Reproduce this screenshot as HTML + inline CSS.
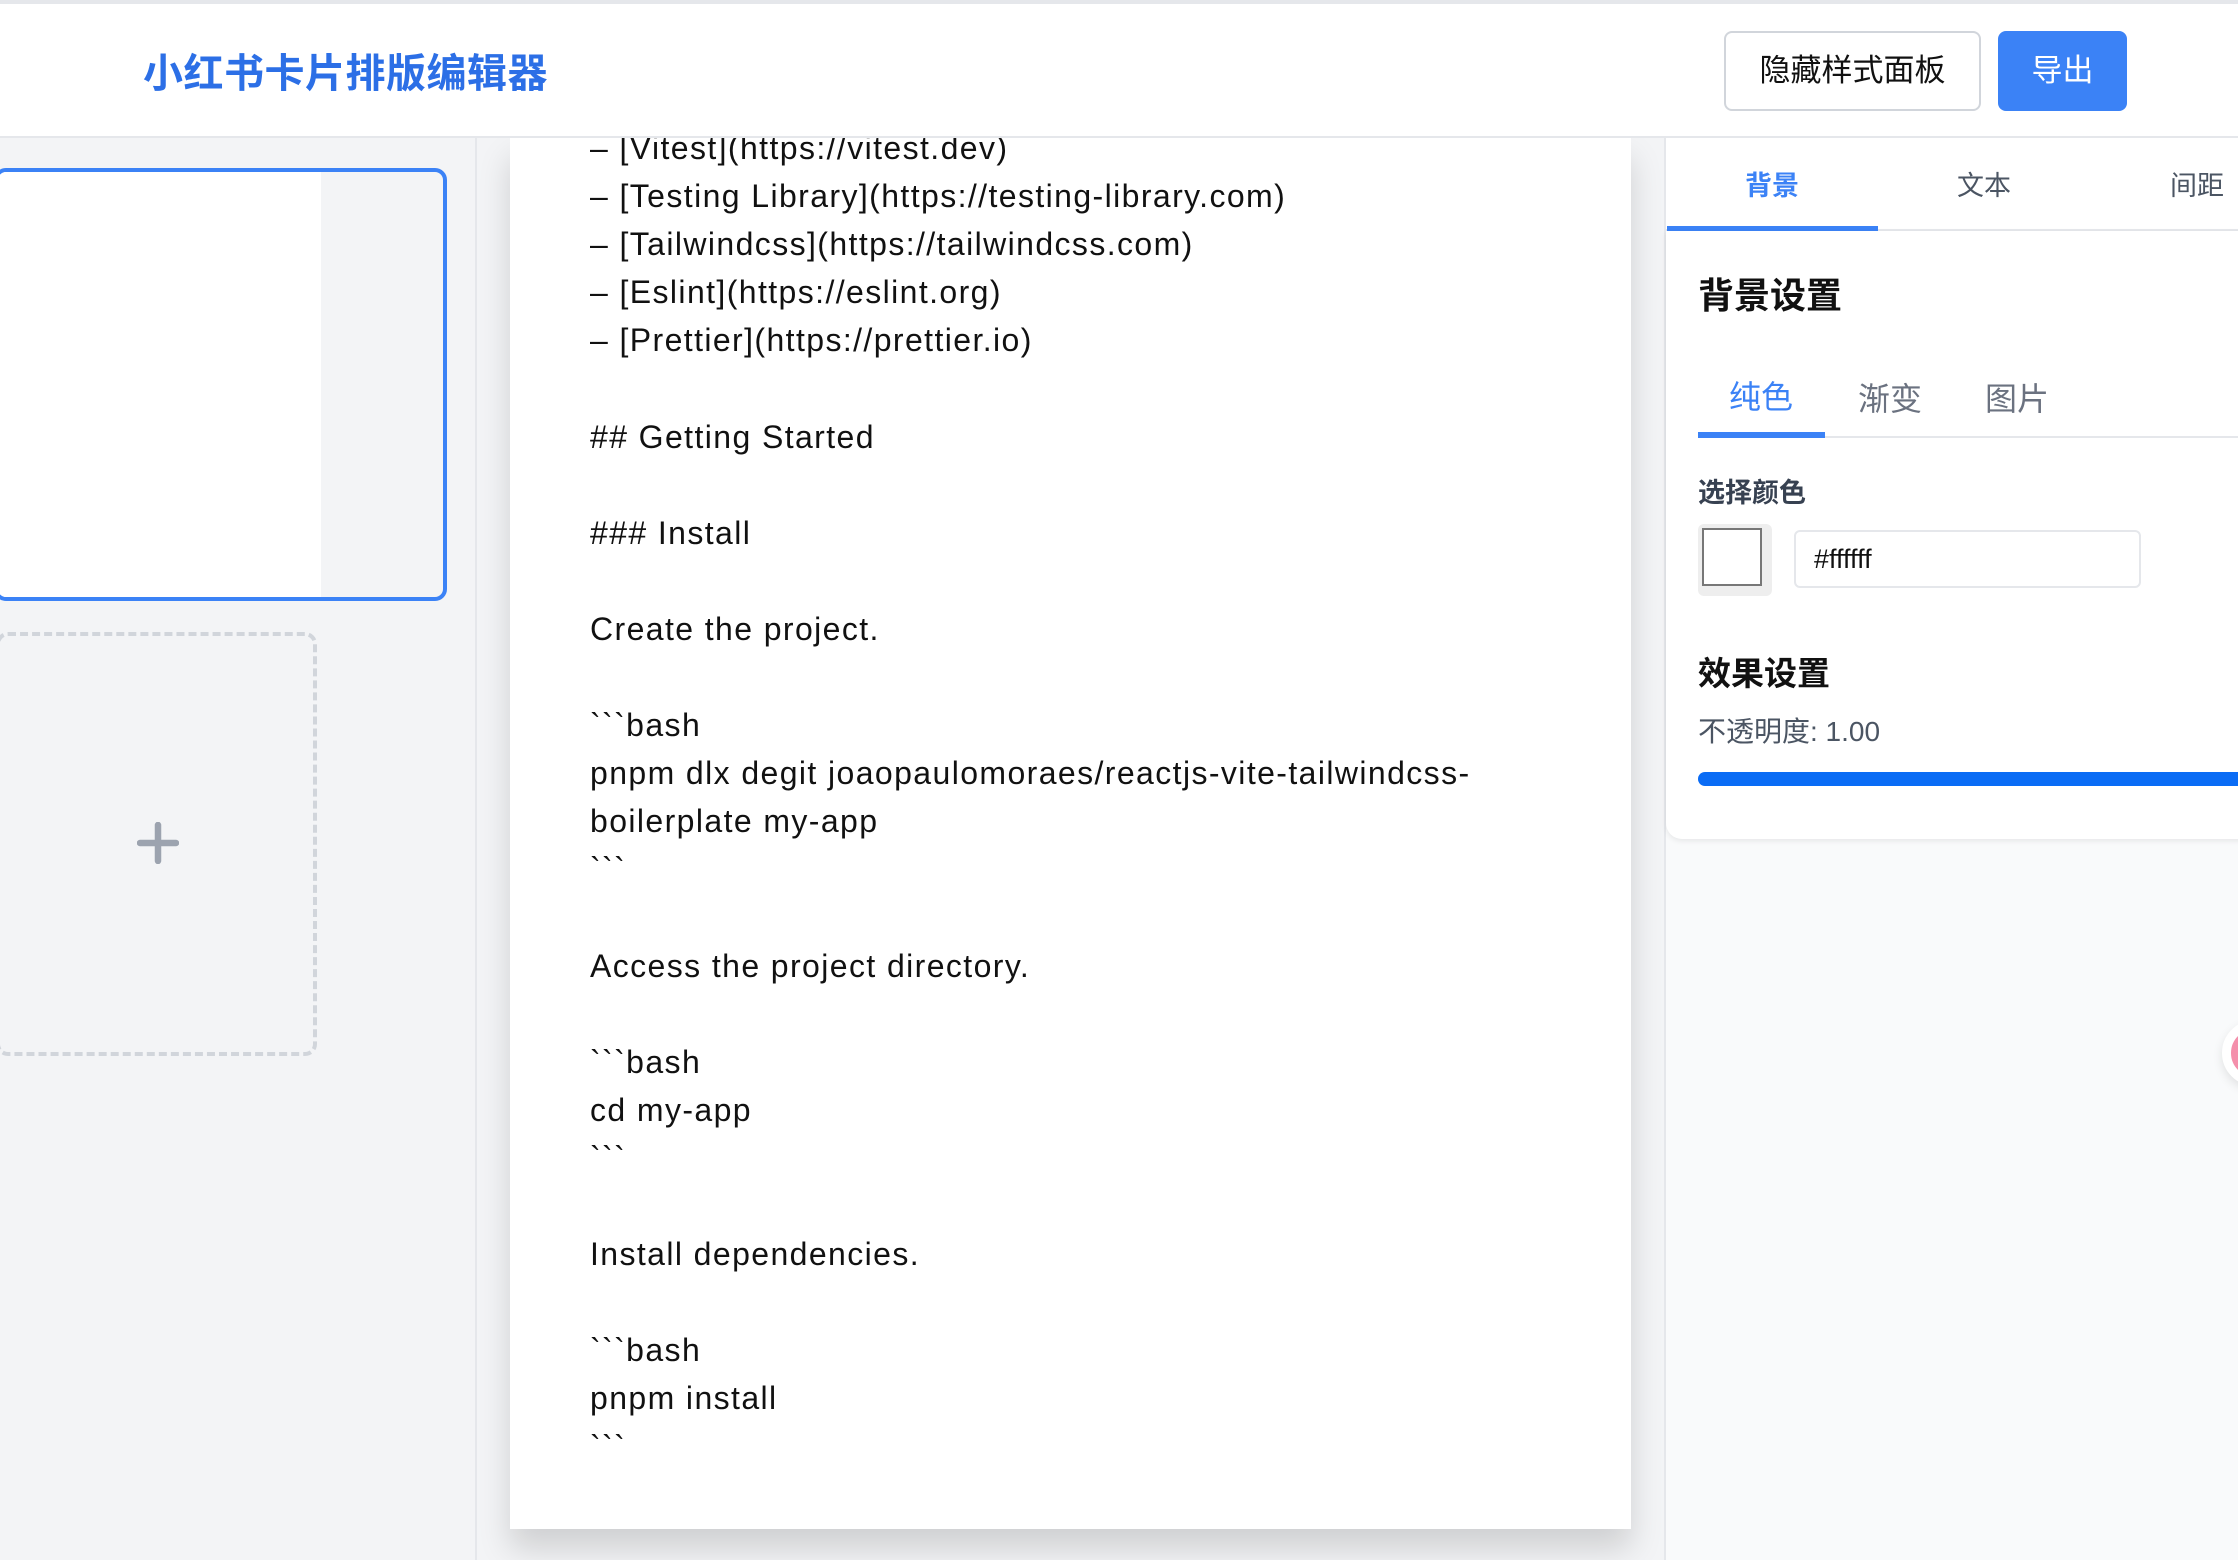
<!DOCTYPE html>
<html><head><meta charset="utf-8"><style>
*{box-sizing:border-box;margin:0;padding:0}
body{width:2238px;height:1560px;overflow:hidden;background:#f3f4f6;font-family:"Liberation Sans","Noto Sans CJK SC",sans-serif;position:relative}
.abs{position:absolute}
#top{left:0;top:0;width:2238px;height:4px;background:#e5e7eb}
#hdr{left:0;top:4px;width:2238px;height:134px;background:#fff;border-bottom:2px solid #e5e7eb;z-index:5}
#title{left:143px;top:37px;font-size:40px;font-weight:bold;color:#2c6fe6;letter-spacing:0.5px}
#b1{left:1724px;top:27px;width:257px;height:80px;border:2px solid #d1d5db;border-radius:8px;background:#fff;font-size:31px;color:#111;text-align:center;line-height:76px}
#b2{left:1998px;top:27px;width:129px;height:80px;border-radius:8px;background:#3b82f6;color:#fff;font-size:31px;text-align:center;line-height:80px}
#left{left:0;top:138px;width:477px;height:1422px;background:#f3f4f6;border-right:2px solid #e5e7eb}
#sel{left:-6px;top:168px;width:453px;height:433px;border:4px solid #3b82f6;border-radius:12px;background:#f3f4f6;overflow:hidden}
#sel div{position:absolute;left:0;top:0;width:323px;height:100%;background:#fff}
#add{left:-4px;top:632px;width:321px;height:424px;border:4px dashed #d1d5db;border-radius:12px}
#mid{left:477px;top:138px;width:1187px;height:1422px;background:#f3f4f6}
#card{left:510px;top:138px;width:1121px;height:1391px;background:#fff;overflow:hidden;box-shadow:0 20px 30px rgba(0,0,0,.15)}
#txt{position:absolute;left:80px;top:-14px;font-size:32px;letter-spacing:1.4px;line-height:48.1px;color:#111;white-space:pre}
#right{left:1664px;top:138px;width:574px;height:1422px;background:#f9fafb;border-left:2px solid #e5e7eb}
#tabs{left:1666px;top:138px;width:572px;height:93px;background:#fff;border-bottom:2px solid #e5e7eb}
.tab{position:absolute;top:26px;font-size:27px;color:#4b5563}
#panel{left:1666px;top:231px;width:600px;height:608px;background:#fff;border-radius:0 0 0 16px;box-shadow:0 2px 6px rgba(0,0,0,.08)}
</style></head><body>
<div class="abs" id="top"></div>
<div class="abs" id="hdr">
<div class="abs" id="title">小红书卡片排版编辑器</div>
<div class="abs" id="b1">隐藏样式面板</div>
<div class="abs" id="b2">导出</div>
</div>
<div class="abs" id="left"></div>
<div class="abs" id="sel"><div></div></div>
<div class="abs" id="add"></div>
<svg class="abs" style="left:137px;top:822px" width="42" height="42"><path d="M21 3V39M3 21H39" stroke="#9ca3af" stroke-width="6.5" stroke-linecap="round"/></svg>
<div class="abs" id="mid"></div>
<div class="abs" id="card"><div id="txt">– [Vitest](https://vitest.dev)
– [Testing Library](https://testing-library.com)
– [Tailwindcss](https://tailwindcss.com)
– [Eslint](https://eslint.org)
– [Prettier](https://prettier.io)

## Getting Started

### Install

Create the project.

&#96;&#96;&#96;bash
pnpm dlx degit joaopaulomoraes/reactjs-vite-tailwindcss-
boilerplate my-app
&#96;&#96;&#96;

Access the project directory.

&#96;&#96;&#96;bash
cd my-app
&#96;&#96;&#96;

Install dependencies.

&#96;&#96;&#96;bash
pnpm install
&#96;&#96;&#96;

Open it in the browser at http://localhost:5173</div></div>
<div class="abs" id="right"></div>
<div class="abs" id="tabs">
<div class="tab" style="left:79px;color:#3b82f6;font-weight:bold">背景</div>
<div class="tab" style="left:291px">文本</div>
<div class="tab" style="left:504px">间距</div>
<div class="abs" style="left:1px;top:88px;width:211px;height:5px;background:#3b82f6"></div>
</div>
<div class="abs" id="panel">
<div class="abs" style="left:32px;top:36px;font-size:36px;font-weight:bold;color:#111">背景设置</div>
<div class="abs" style="left:32px;top:205px;width:600px;height:2px;background:#e5e7eb"></div>
<div class="abs" style="left:32px;top:201px;width:127px;height:6px;background:#3b82f6"></div>
<div class="abs" style="left:63px;top:141px;font-size:32px;color:#3b82f6">纯色</div>
<div class="abs" style="left:192px;top:143px;font-size:32px;color:#6b7280">渐变</div>
<div class="abs" style="left:319px;top:143px;font-size:32px;color:#6b7280">图片</div>
<div class="abs" style="left:32px;top:240px;font-size:27px;font-weight:bold;color:#374151">选择颜色</div>
<div class="abs" style="left:32px;top:293px;width:74px;height:72px;background:#eee;border-radius:6px"></div>
<div class="abs" style="left:36px;top:297px;width:60px;height:58px;background:#fff;border:2px solid #777"></div>
<div class="abs" style="left:128px;top:299px;width:347px;height:58px;border:2px solid #e5e7eb;border-radius:6px;font-size:27px;padding-left:18px;line-height:54px;color:#111">#ffffff</div>
<div class="abs" style="left:32px;top:416px;font-size:33px;font-weight:bold;color:#111">效果设置</div>
<div class="abs" style="left:32px;top:479px;font-size:28px;color:#4b5563">不透明度: 1.00</div>
<div class="abs" style="left:32px;top:541px;width:600px;height:14px;background:#0a6cf5;border-radius:7px"></div>
</div>
<div class="abs" style="left:2222px;top:1020px;width:66px;height:66px;border-radius:50%;background:#f48fab;border:9px solid #fff;box-shadow:0 4px 10px rgba(0,0,0,.1)"></div>
</body></html>
